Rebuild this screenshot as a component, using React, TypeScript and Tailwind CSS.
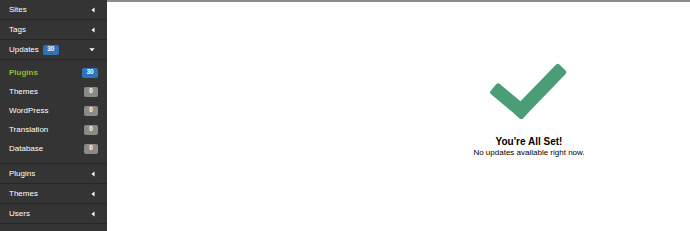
const topItems = ["Sites", "Tags"];
const subItems = [
  { label: "Plugins", count: 30, active: true },
  { label: "Themes", count: 0 },
  { label: "WordPress", count: 0 },
  { label: "Translation", count: 0 },
  { label: "Database", count: 0 },
];
const bottomItems = ["Plugins", "Themes", "Users", "Settings"];

function CaretLeft() {
  return (
    <svg width="4" height="6" viewBox="0 0 4 6" className="shrink-0">
      <path d="M3.5 0.5 L0.5 3 L3.5 5.5 Z" fill="#ffffff" />
    </svg>
  );
}

function CaretDown() {
  return (
    <svg width="6" height="4" viewBox="0 0 6 4" className="shrink-0">
      <path d="M0.3 0.3 L5.7 0.3 L3 3.3 Z" fill="#ffffff" />
    </svg>
  );
}

function Badge({ count, blue }: { count: number; blue?: boolean }) {
  return (
    <span
      className={`flex h-[10px] items-center justify-center rounded-[2px] px-[3px] text-[6.5px] font-bold leading-none text-white ${
        blue ? "min-w-[16px] bg-[#2f72b8]" : "min-w-[14px] bg-[#8a8a8a]"
      }`}
    >
      {count}
    </span>
  );
}

function NavRow({ label }: { label: string }) {
  return (
    <div className="flex h-5 items-center justify-between border-b border-[#262626] pl-[9px] pr-[12px]">
      <span>{label}</span>
      <CaretLeft />
    </div>
  );
}

export default function App() {
  return (
    <div
      className="flex h-[231px] w-[690px] overflow-hidden bg-white"
      style={{ fontFamily: '"Liberation Sans", Arial, sans-serif' }}
    >
      <aside className="w-[107px] shrink-0 bg-[#343434] text-[8px] text-white">
        {topItems.map((item) => (
          <NavRow key={item} label={item} />
        ))}
        <div className="flex h-5 items-center justify-between border-b border-[#262626] pl-[9px] pr-[12px]">
          <span className="flex items-center gap-[4px]">
            Updates
            <Badge count={30} blue />
          </span>
          <CaretDown />
        </div>
        <div className="border-b border-[#262626] pb-[5px] pt-[3px]">
          {subItems.map((item) => (
            <div key={item.label} className="flex h-[19px] items-center justify-between pl-[9px] pr-[9px]">
              <span className={item.active ? "font-bold text-[#8fbc3c]" : ""}>{item.label}</span>
              <Badge count={item.count} blue={item.active} />
            </div>
          ))}
        </div>
        {bottomItems.map((item) => (
          <NavRow key={item} label={item} />
        ))}
      </aside>
      <main className="relative flex-1 overflow-hidden border-t-[2px] border-[#8c8c8c]">
        <div className="flex w-[844px] flex-col items-center pt-[60px]">
          {/* check mark drawn as two rounded bars */}
          <svg width="82" height="59" viewBox="0 0 82 59">
            <g fill="#4b9d78">
              <rect x="0" y="-6.75" width="42.5" height="13.5" rx="2.5" transform="translate(5.5 25.5) rotate(39.9)" />
              <rect x="-6.75" y="-6.75" width="66.5" height="13.5" rx="2.5" transform="translate(33 48.5) rotate(-46)" />
            </g>
          </svg>
          <h1 className="mt-[15px] text-[10px] font-bold leading-[12px] text-black">You're All Set!</h1>
          <p className="text-[8px] leading-[10px] text-black">No updates available right now.</p>
        </div>
      </main>
    </div>
  );
}
